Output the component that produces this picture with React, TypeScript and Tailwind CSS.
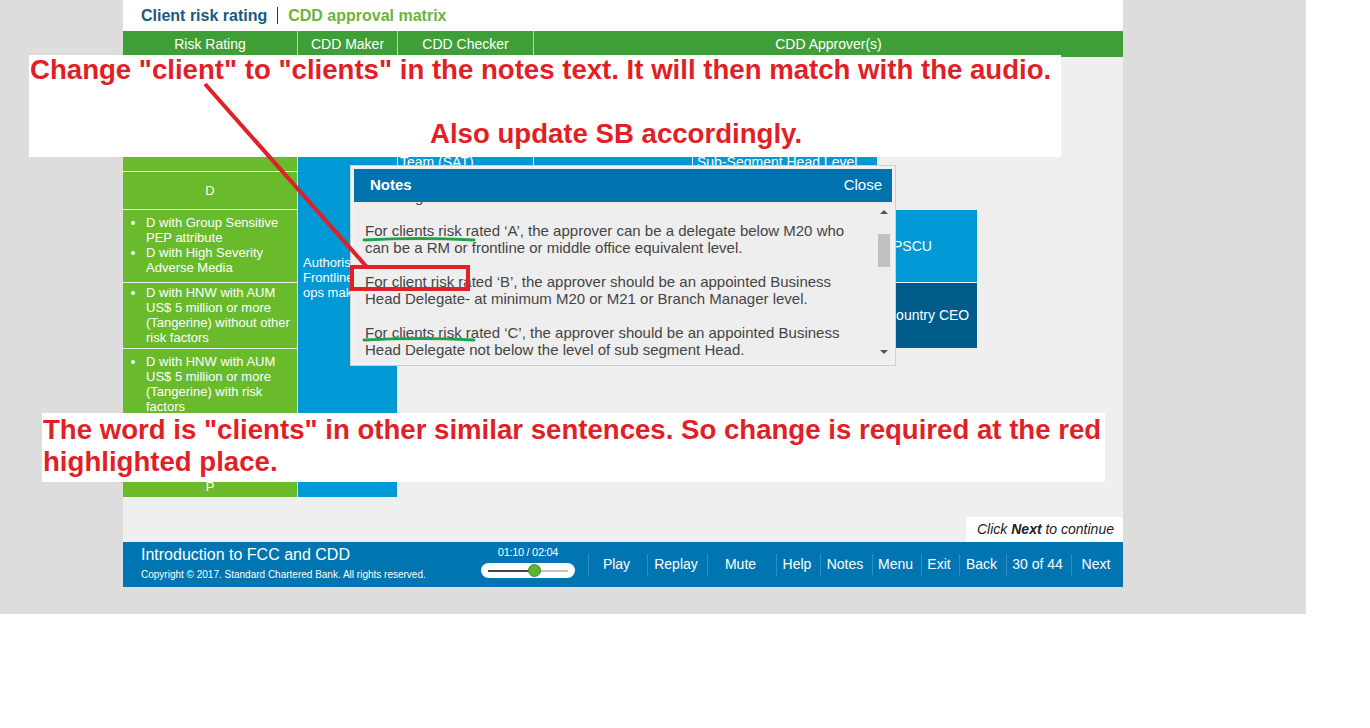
const navItems = [
  { label: "Play", cls: "w-[59px]" },
  { label: "Replay", cls: "w-[60px]" },
  { label: "Mute", cls: "w-[69px]" },
  { label: "Help", cls: "w-[44px]" },
  { label: "Notes", cls: "w-[52px]" },
  { label: "Menu", cls: "w-[49px]" },
  { label: "Exit", cls: "w-[38px]" },
  { label: "Back", cls: "w-[47px]" },
  { label: "30 of 44", cls: "w-[65px]" },
  { label: "Next", cls: "w-[52px]" },
];

function MatrixTable() {
  return (
    <>
      {/* header row */}
      <div className="grid grid-cols-[174px_99px_135px_589px] gap-px bg-[#b4d9ae] h-[26px] text-[14px] text-white">
        <div className="bg-[#3f9f37] flex items-center justify-center">Risk Rating</div>
        <div className="bg-[#3f9f37] flex items-center justify-center">CDD Maker</div>
        <div className="bg-[#3f9f37] flex items-center justify-center">CDD Checker</div>
        <div className="bg-[#3f9f37] flex items-center justify-center">CDD Approver(s)</div>
      </div>

      {/* body */}
      <div className="grid grid-cols-[174px_99px_135px_158px_184px_99px] grid-rows-[114px_37px_72px_65px_125px_22px] gap-px text-[13px] leading-[15px] text-white">
        <div className="bg-[#69bb2b] col-start-1 row-start-1" />
        <div className="bg-[#69bb2b] col-start-1 row-start-2 flex items-center justify-center">D</div>
        <div className="bg-[#69bb2b] col-start-1 row-start-3 pt-[5px] pr-[2px]">
          <ul className="list-disc pl-[23px]">
            <li>D with Group Sensitive PEP attribute</li>
            <li>D with High Severity Adverse Media</li>
          </ul>
        </div>
        <div className="bg-[#69bb2b] col-start-1 row-start-4 pt-[2px] pr-[2px]">
          <ul className="list-disc pl-[23px]">
            <li>D with HNW with AUM US$ 5 million or more (Tangerine) without other risk factors</li>
          </ul>
        </div>
        <div className="bg-[#69bb2b] col-start-1 row-start-5 pt-[5px] pr-[2px]">
          <ul className="list-disc pl-[23px]">
            <li>D with HNW with AUM US$ 5 million or more (Tangerine) with risk factors</li>
          </ul>
        </div>
        <div className="bg-[#69bb2b] col-start-1 row-start-6 flex items-center justify-center">P</div>

        {/* maker */}
        <div className="bg-[#0099d5] col-start-2 row-start-1 row-span-6 flex items-center pl-[5px]">
          <span>
            Authorised
            <br />
            Frontline or
            <br />
            ops maker
          </span>
        </div>

        {/* checker */}
        <div className="bg-[#0099d5] col-start-3 row-start-1 flex flex-col justify-end pb-[1px] pl-[2px] text-[14px]">
          <span>Business Support/</span>
          <span>Assurance</span>
          <span>Team (SAT)</span>
        </div>

        {/* approvers */}
        <div className="bg-[#0099d5] col-start-4 row-start-1" />
        <div className="bg-[#0099d5] col-start-5 row-start-1 flex flex-col justify-end pb-[1px] pl-[4px] text-[14px]">
          <span>Business Head Delegate</span>
          <span>Sub-Segment Head Level</span>
        </div>
        <div className="bg-[#0099d5] col-start-6 row-start-3 flex items-center pl-[15px] text-[14px]">PSCU</div>
        <div className="bg-[#005d8b] col-start-6 row-start-4 flex items-center pl-[8px] text-[14px]">Country CEO</div>
      </div>
    </>
  );
}

function BottomBar() {
  return (
    <div className="h-[45px] bg-[#0075b1] flex text-white">
      <div className="w-[358px] pl-[18px] pt-[4px]">
        <div className="text-[16px] leading-[18px]">Introduction to FCC and CDD</div>
        <div className="text-[10px] leading-[12px] mt-[5px]">Copyright © 2017. Standard Chartered Bank. All rights reserved.</div>
      </div>
      <div className="w-[94px] pt-[4px] flex flex-col items-center">
        <div className="text-[11px] leading-[12px] tracking-[-0.3px]">01:10 / 02:04</div>
        <div className="mt-[5px] w-[94px] h-[15px] bg-white rounded-full flex items-center px-[7px]">
          <div className="h-[2px] w-[46px] bg-[#444]" />
          <div className="w-[13px] h-[13px] -mx-[6px] rounded-full bg-[#5cb531] border border-[#3f8f25] relative" />
          <div className="h-[2px] flex-1 bg-[#c4c4c4]" />
        </div>
      </div>
      <div className="w-[13px]" />
      <div className="flex">
        {navItems.map((n) => (
          <div key={n.label} className={`${n.cls} flex items-center`}>
            <span className="w-px h-[22px] bg-[#2f8dc2]" />
            <span className="flex-1 text-center text-[14px] pr-[3px]">{n.label}</span>
          </div>
        ))}
      </div>
    </div>
  );
}

function NotesPopup() {
  return (
    <div className="absolute left-[350px] top-[165px] w-[546px] h-[201px] bg-[#f1f1f1] border border-[#cfcfcf] p-[3px] flex flex-col">
      <div className="h-[33px] bg-[#0072ae] flex items-center justify-between pl-[16px] pr-[10px] text-white text-[15px]">
        <span className="font-bold">Notes</span>
        <span>Close</span>
      </div>
      <div className="flex-1 flex overflow-hidden bg-[#eeeeee]">
        <div className="w-[522px] pl-[11px] pr-[6px] text-[15px] leading-[17px] text-[#444]">
          <div className="-mt-[31px]">
            <p className="mb-[17px]">
              The CDD approver depends on the risk rating, as
              <br />
              following:
            </p>
            <p className="mb-[17px]">
              For clients risk rated ‘A’, the approver can be a delegate below M20 who can be a RM or frontline or middle office equivalent level.
            </p>
            <p className="mb-[17px]">
              For client risk rated ‘B’, the approver should be an appointed Business Head Delegate- at minimum M20 or M21 or Branch Manager level.
            </p>
            <p>
              For clients risk rated ‘C’, the approver should be an appointed Business Head Delegate not below the level of sub segment Head.
            </p>
          </div>
        </div>
        <div className="w-[15px] flex flex-col items-center">
          <div className="h-[20px] flex items-center">
            <span className="border-x-[4px] border-b-[4px] border-x-transparent border-b-[#555]" />
          </div>
          <div className="mt-[12px] w-[12px] h-[33px] bg-[#c1c1c1]" />
          <div className="flex-1" />
          <div className="h-[20px] flex items-center">
            <span className="border-x-[4px] border-t-[4px] border-x-transparent border-t-[#555]" />
          </div>
        </div>
      </div>
    </div>
  );
}

export default function App() {
  return (
    <div className="relative w-[1370px] h-[728px] bg-white overflow-hidden font-['Liberation_Sans',Arial,sans-serif]">
      <div className="w-[1306px] h-[614px] bg-[#dddddd] pl-[123px]">
        <div className="w-[1000px] h-[587px] flex flex-col">
          <div className="h-[31px] shrink-0 bg-white flex items-center pl-[18px] text-[16px] font-bold">
            <span className="text-[#175b80]">Client risk rating</span>
            <span className="mx-[10px] w-px h-[17px] bg-[#333]" />
            <span className="text-[#6cb33e]">CDD approval matrix</span>
          </div>
          <div className="flex-1 bg-[#efefef] flex flex-col">
            <MatrixTable />
            <div className="flex-1" />
            <div className="flex justify-end">
              <div className="w-[157px] h-[25px] bg-white pl-[11px] flex items-center text-[14px] italic text-[#222]">
                Click&nbsp;<b>Next</b>&nbsp;to continue
              </div>
            </div>
          </div>
          <BottomBar />
        </div>
      </div>

      <NotesPopup />

      {/* review annotations */}
      <div className="absolute left-[29px] top-[55px] w-[1032px] h-[102px] bg-white text-[#e11f26] font-bold text-[27.6px] leading-[30px] whitespace-nowrap">
        <div className="pl-[1px]">Change "client" to "clients" in the notes text. It will then match with the audio.</div>
        <div className="pl-[401px] mt-[34px]">Also update SB accordingly.</div>
      </div>
      <div className="absolute left-[42px] top-[413px] w-[1063px] h-[69px] bg-white text-[#e11f26] font-bold text-[27.6px] leading-[32px] pt-px whitespace-nowrap">
        <div className="pl-px">The word is "clients" in other similar sentences. So change is required at the red</div>
        <div className="pl-px">highlighted place.</div>
      </div>

      <svg className="absolute left-0 top-0 pointer-events-none" width="1370" height="728">
        <line x1="205" y1="84" x2="366" y2="266" stroke="#e11f26" strokeWidth="4" />
        <rect x="352" y="267" width="116" height="22" fill="none" stroke="#e11f26" strokeWidth="4" />
        <path d="M364 240 Q419 237 474 240" fill="none" stroke="#1ea446" strokeWidth="3" strokeLinecap="round" />
        <path d="M364 340 Q419 337 474 340" fill="none" stroke="#1ea446" strokeWidth="3" strokeLinecap="round" />
      </svg>
    </div>
  );
}
